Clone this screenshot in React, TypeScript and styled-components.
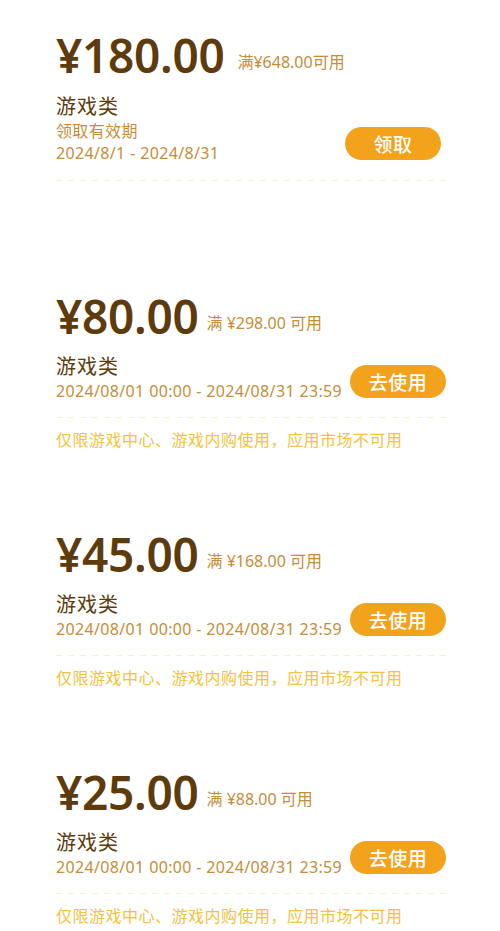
import styled, { createGlobalStyle } from 'styled-components';

const BROWN = '#5e3b0c';
const AMBER = '#c68d38';
const ORANGE = '#f3a21c';
const YELLOW = '#f2c240';

const GlobalStyle = createGlobalStyle`
    body {
        margin: 0;
        background: #ffffff;
        font-family: "Noto Sans", "Noto Sans CJK SC", sans-serif;
    }
`

const Page = styled.div`
    display: flex;
    flex-direction: column;
    padding: 29px 54px 0 56px;
    width: 500px;
    box-sizing: border-box;
`

const Card = styled.div<{ $gap: number }>`
    display: flex;
    flex-direction: column;
    margin-bottom: ${props => props.$gap}px;
`

const PriceRow = styled.div<{ $gap: number }>`
    display: flex;
    align-items: center;
    gap: ${props => props.$gap}px;
`

const Price = styled.span`
    color: ${BROWN};
    font-family: "Noto Sans", "Noto Sans CJK SC", sans-serif;
    font-size: 46px;
    font-weight: 600;
    line-height: 52px;
    letter-spacing: -0.3px;
`

const Condition = styled.span`
    color: ${AMBER};
    font-size: 16px;
    line-height: 20px;
    padding-top: 14px;
`

const InfoRow = styled.div`
    display: flex;
    justify-content: space-between;
    align-items: flex-end;
`

const InfoColumn = styled.div<{ $top: number }>`
    display: flex;
    flex-direction: column;
    padding-top: ${props => props.$top}px;
`

const Category = styled.span`
    color: ${BROWN};
    font-family: "Noto Sans CJK SC", sans-serif;
    font-size: 20px;
    line-height: 26px;
    letter-spacing: 1px;
    margin-bottom: 1px;
`

const SmallText = styled.span`
    color: ${AMBER};
    font-size: 16px;
    line-height: 22px;
    letter-spacing: 0.35px;
`

const ActionButton = styled.button<{ $right: number }>`
    background: ${ORANGE};
    border: none;
    border-radius: 17px;
    color: #ffffff;
    font-family: "Noto Sans CJK SC", sans-serif;
    font-size: 19px;
    font-weight: 500;
    height: 33px;
    width: 96px;
    margin: 0 ${props => props.$right}px 4px 0;
    padding: 0;
    letter-spacing: 0.5px;
    cursor: pointer;
`

const Dashed = styled.div<{ $top: number }>`
    height: 1px;
    margin-top: ${props => props.$top}px;
    background: repeating-linear-gradient(90deg, #fcf1cf 0 6px, transparent 6px 12px);
`

const Restriction = styled.span`
    color: ${YELLOW};
    font-family: "Noto Sans CJK SC", sans-serif;
    font-size: 16px;
    line-height: 22px;
    letter-spacing: 0.5px;
    margin-top: 10px;
`

type Coupon = {
    amount: string;
    condition: string;
}

const coupons: Coupon[] = [
    { amount: '¥80.00', condition: '满 ¥298.00 可用' },
    { amount: '¥45.00', condition: '满 ¥168.00 可用' },
    { amount: '¥25.00', condition: '满 ¥88.00 可用' },
];

const ClaimCard = () => (
    <Card $gap={109}>
        <PriceRow $gap={13}>
            <Price>¥180.00</Price>
            <Condition>满¥648.00可用</Condition>
        </PriceRow>
        <InfoRow>
            <InfoColumn $top={12}>
                <Category>游戏类</Category>
                <SmallText>领取有效期</SmallText>
                <SmallText>2024/8/1 - 2024/8/31</SmallText>
            </InfoColumn>
            <ActionButton $right={5}>领取</ActionButton>
        </InfoRow>
        <Dashed $top={16} />
    </Card>
)

const UseCard = ({ coupon }: { coupon: Coupon }) => (
    <Card $gap={78}>
        <PriceRow $gap={8}>
            <Price>{coupon.amount}</Price>
            <Condition>{coupon.condition}</Condition>
        </PriceRow>
        <InfoRow>
            <InfoColumn $top={11}>
                <Category>游戏类</Category>
                <SmallText>2024/08/01 00:00 - 2024/08/31 23:59</SmallText>
            </InfoColumn>
            <ActionButton $right={0}>去使用</ActionButton>
        </InfoRow>
        <Dashed $top={15} />
        <Restriction>仅限游戏中心、游戏内购使用，应用市场不可用</Restriction>
    </Card>
)

const App = () => {
    return (
        <>
            <GlobalStyle />
            <Page>
                <ClaimCard />
                {coupons.map(c => <UseCard key={c.amount} coupon={c} />)}
            </Page>
        </>
    )
}

export default App;
